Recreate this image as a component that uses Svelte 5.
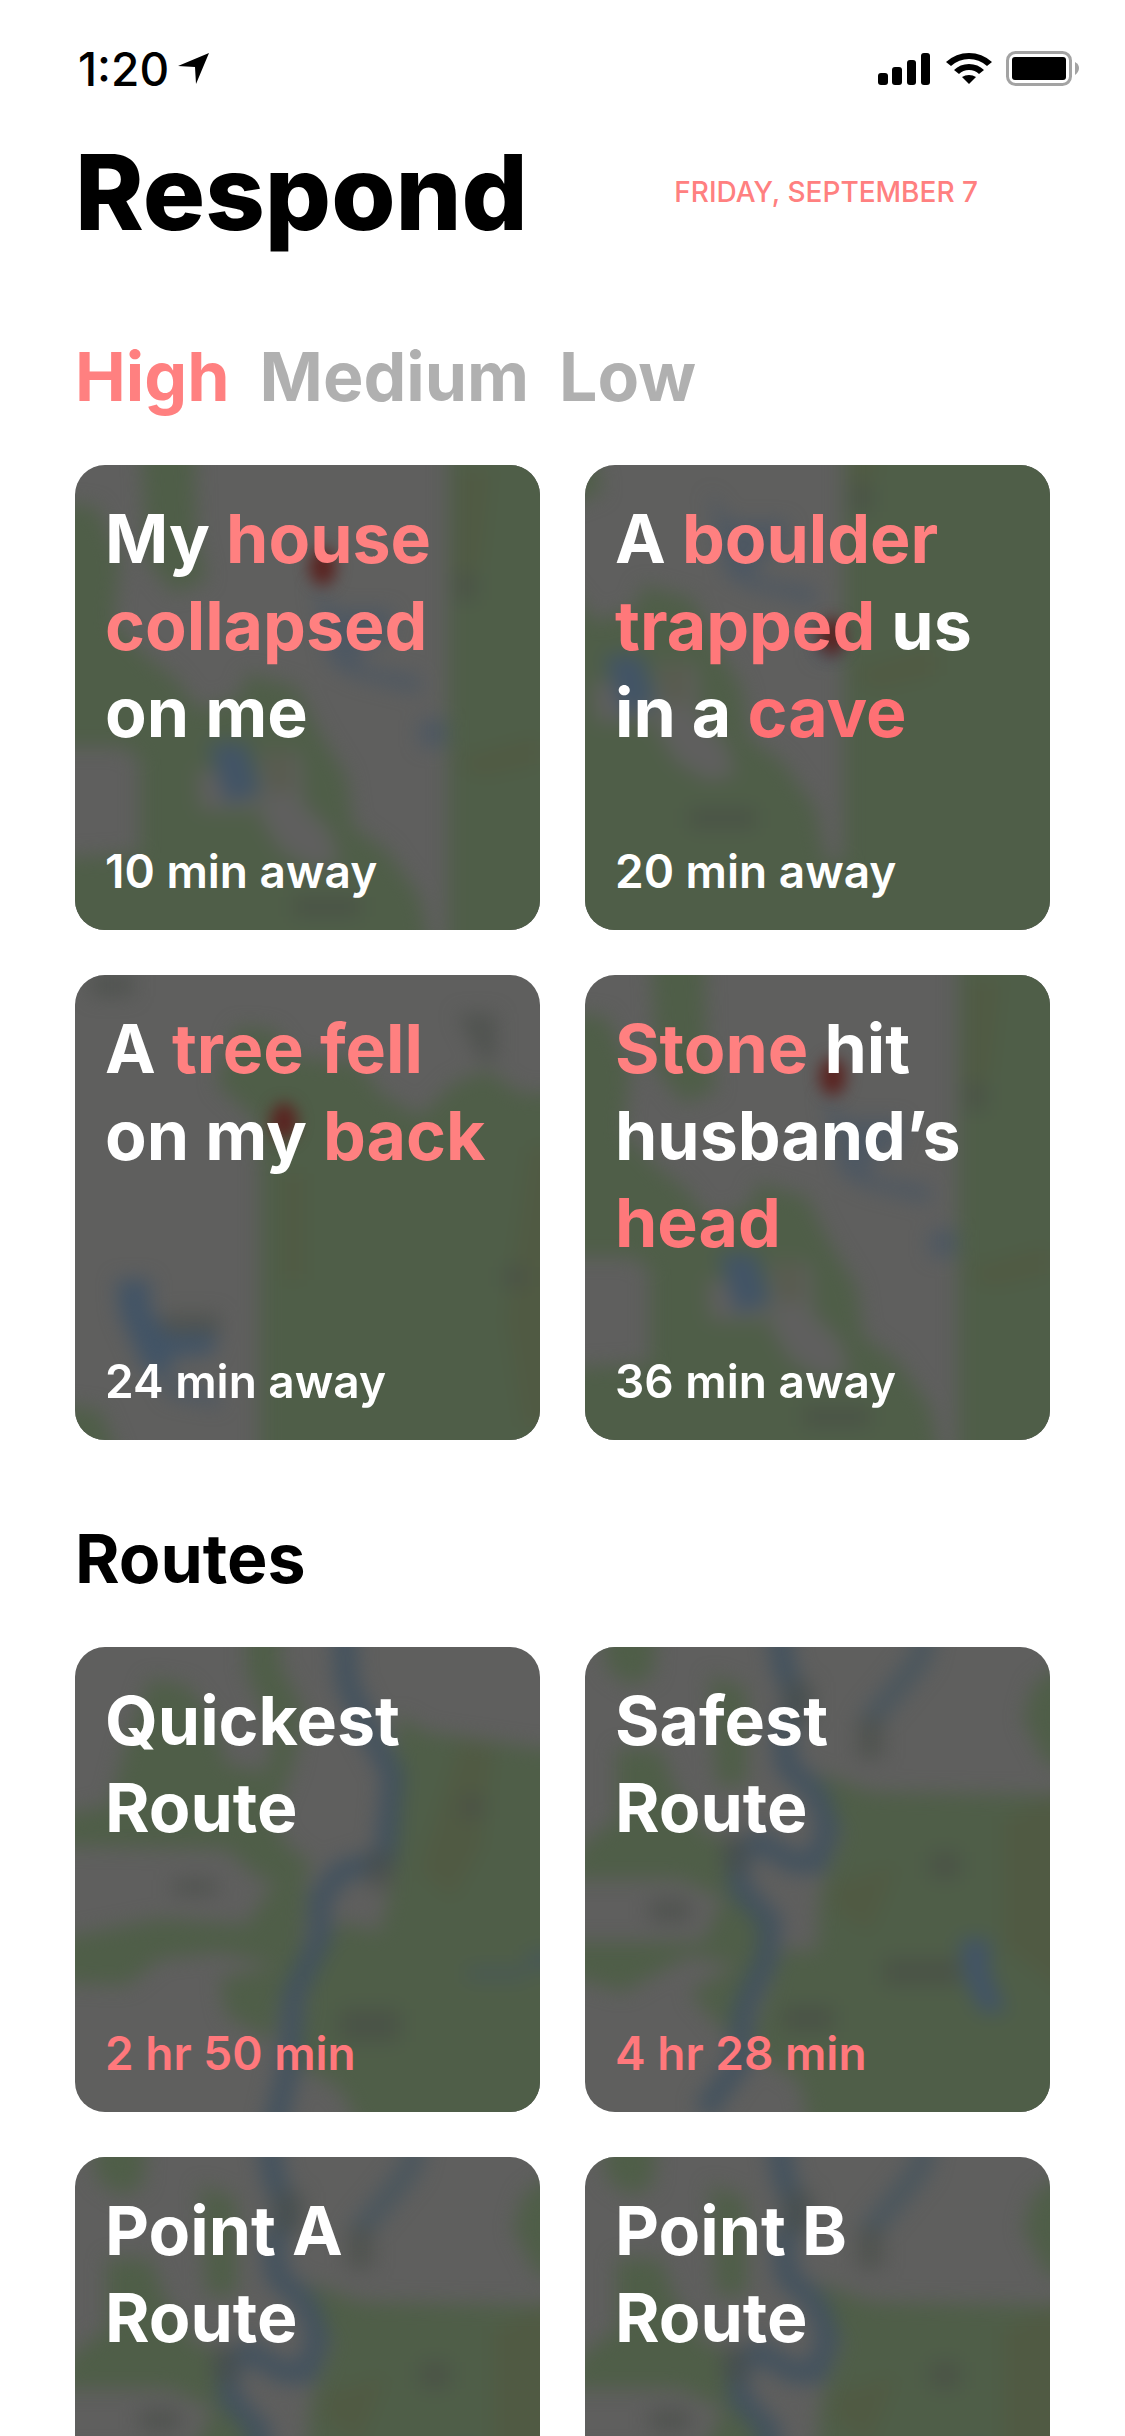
<script>
    const priorities = ['High', 'Medium', 'Low'];
    let selected = $state('High');

    const valley = [
        { kind: 'land', d: 'M1165 -400H2200V2200H1165Z' },
        { kind: 'land', d: 'M240 -100H400L410 260L440 390L340 430L260 330Z' },
        { kind: 'land', d: 'M-100 150L110 170L180 330L160 520L260 620L340 680L420 780L540 740L560 670L710 710L780 850L860 980L880 1130L980 1200L1080 1340L1110 1500H1300V1800H-100V1230L240 1210V930L190 890H-100Z' },
        { kind: 'ground', d: 'M610 900L720 910L730 1060L810 1140L840 1240L760 1260L660 1200L600 1100Z' },
        { kind: 'ground', d: 'M410 960H590V1080H420Z' },
        { kind: 'water', d: 'M760 390L820 480L1000 480L980 570L910 590L900 650L1080 680V730L880 680L810 640Z', soft: true },
        { kind: 'water', d: 'M445 880H560L600 1030L500 1060Z' },
        { kind: 'water', d: 'M1080 810H1160V890H1080Z', soft: true },
        { kind: 'scrub', d: 'M1200 60H1290L1260 330L1190 440Z' },
        { kind: 'scrub', d: 'M1180 930L1440 860V940L1260 980Z' },
        { kind: 'scrub', d: 'M620 910H690V1030H640Z' },
        { kind: 'label', d: 'M700 1340H900V1400H700Z' },
        { kind: 'label', d: 'M1190 370H1250V450H1190Z' }
    ];

    const forest = [
        { kind: 'land', d: 'M600 1600V620L590 480L470 370L530 200L640 210L700 290L900 310L960 400L1080 470L1180 370L1280 330L1380 400H1600V1600H600Z' },
        { kind: 'land', d: 'M-50 1330L120 1350L180 1500H-50Z' },
        { kind: 'water', d: 'M170 960H270V1050L330 1120L470 1110L460 1180L340 1190L310 1260L250 1220L180 1060Z' },
        { kind: 'water', d: 'M300 1240L480 1300V1340L320 1310Z', soft: true },
        { kind: 'scrub', d: 'M670 640H730V960H670Z' },
        { kind: 'scrub', d: 'M1410 560H1500V1400H1390L1340 1080Z' },
        { kind: 'label', d: 'M1190 160H1310V300H1260Z' },
        { kind: 'label', d: 'M1330 920H1400V980H1330Z' },
        { kind: 'label', d: 'M310 1060H480V1120H310Z' },
        { kind: 'label', d: 'M90 40H220V110H90Z' }
    ];

    const quickest = [
        { kind: 'land', d: 'M-50 640V560L150 520L200 330L270 140L380 160L460 260L500 400L620 420L640 300L560 120V-50H660V100L730 230L700 400L640 560L680 640L760 700L720 760L600 740L500 650Z' },
        { kind: 'land', d: 'M-50 930L300 860L560 880L650 740L740 760L720 1000L660 1100L640 1230L500 1150L480 1040L650 1000L480 960L300 980L200 1060L-50 1050Z' },
        { kind: 'land', d: 'M1010 250L1100 300L1440 350L1600 340V1600H960L840 1370L720 1300L750 1020L840 870L960 900L1000 740Z' },
        { kind: 'river', d: 'M850 -50L860 150L920 280L1000 430L975 680L840 720L780 800L780 920L700 1090L690 1290L640 1500' },
        { kind: 'scrub', d: 'M1200 330L1300 350L1260 650L1180 800L1080 720Z' },
        { kind: 'label', d: 'M340 740H470V790H340Z' },
        { kind: 'label', d: 'M920 660H1000V770H920Z' },
        { kind: 'label', d: 'M840 1130H1020V1230H840Z' },
        { kind: 'label', d: 'M1200 490H1270V560H1200Z' },
        { kind: 'water', d: 'M1220 1010H1500V960H1400V1040H1220Z', soft: true }
    ];

    const safest = [
        { kind: 'land', d: 'M740 420L900 480L1440 490L1600 450V1600H740L690 1350L560 1260L560 1180L640 950L740 960L750 780L820 600Z' },
        { kind: 'land', d: 'M-50 740L60 620L140 560L140 350L270 350L320 480L400 600L500 640L480 760L600 880L590 980L480 1220L360 1080L500 1000L360 970L160 1080L-50 1020V930H400L460 800L330 740H-50Z' },
        { kind: 'land', d: 'M100 -50H260L250 130L180 160L110 110Z' },
        { kind: 'land', d: 'M420 130L530 170V460H440Z' },
        { kind: 'land', d: 'M1500 80L1390 160L1360 260L1430 400H1500Z' },
        { kind: 'river', d: 'M620 -50L640 100L680 210L640 310L650 400L745 490L775 590L740 690L670 690L570 630L500 670L510 770L600 870L590 980L520 1130L510 1290L400 1440' },
        { kind: 'river', d: 'M1080 -50L1050 80L980 170L895 270', soft: true },
        { kind: 'water', d: 'M1170 920H1260V1020L1310 1140H1230L1180 1030Z' },
        { kind: 'scrub', d: 'M780 760L980 700L900 900L800 840Z' },
        { kind: 'scrub', d: 'M1300 560L1500 480V1100L1300 940Z' },
        { kind: 'label', d: 'M240 800H360V870H240Z' },
        { kind: 'label', d: 'M940 980H1170V1060H940Z' },
        { kind: 'label', d: 'M640 1120H790V1200H640Z' },
        { kind: 'label', d: 'M1080 660H1170V740H1080Z' },
        { kind: 'label', d: 'M860 260H940V380H860Z' },
        { kind: 'label', d: 'M640 150H730V270H640Z' },
        { kind: 'label', d: 'M460 610H530V720H460Z' }
    ];

    const emergencies = [
        {
            lines: [[{ text: 'My ' }, { text: 'house', tone: 'soft' }], [{ text: 'collapsed', tone: 'soft' }], [{ text: 'on me' }]],
            distance: '10 min away',
            map: valley,
            pin: { x: 788, y: 350 }
        },
        {
            lines: [
                [{ text: 'A ' }, { text: 'boulder', tone: 'soft' }],
                [{ text: 'trapped', tone: 'mid' }, { text: ' us' }],
                [{ text: 'in a ' }, { text: 'cave', tone: 'strong' }]
            ],
            distance: '20 min away',
            map: valley,
            shift: { x: -343, y: -265 },
            pin: { x: 785, y: 560 }
        },
        {
            lines: [[{ text: 'A ' }, { text: 'tree fell', tone: 'soft' }], [{ text: 'on my ' }, { text: 'back', tone: 'soft' }]],
            distance: '24 min away',
            map: forest,
            pin: { x: 672, y: 485 }
        },
        {
            lines: [[{ text: 'Stone', tone: 'soft' }, { text: ' hit' }], [{ text: 'husband’s' }], [{ text: 'head', tone: 'mid' }]],
            distance: '36 min away',
            map: valley,
            pin: { x: 788, y: 350 }
        }
    ];

    const routes = [
        { lines: [[{ text: 'Quickest' }], [{ text: 'Route' }]], duration: '2 hr 50 min', map: quickest },
        { lines: [[{ text: 'Safest' }], [{ text: 'Route' }]], duration: '4 hr 28 min', map: safest },
        { lines: [[{ text: 'Point A' }], [{ text: 'Route' }]], map: safest },
        { lines: [[{ text: 'Point B' }], [{ text: 'Route' }]], map: safest }
    ];
</script>

{#snippet card(item)}
    <a class="card" href="#map">
        <svg class="map" viewBox="45 45 1395 1395" preserveAspectRatio="xMidYMid slice" aria-hidden="true">
            <g class="terrain" transform="translate({item.shift?.x ?? 0} {item.shift?.y ?? 0})">
                {#each item.map as shape}
                    <path class={shape.kind} class:soft={shape.soft} d={shape.d} />
                {/each}
            </g>
            {#if item.pin}
                <ellipse class="pin" cx={item.pin.x} cy={item.pin.y} rx="40" ry="56" />
            {/if}
        </svg>
        <h3>
            {#each item.lines as line}
                <span class="line">{#each line as part}<span class={part.tone}>{part.text}</span>{/each}</span>
            {/each}
        </h3>
        {#if item.distance}
            <p>{item.distance}</p>
        {/if}
        {#if item.duration}
            <p class="duration">{item.duration}</p>
        {/if}
    </a>
{/snippet}

<div class="screen">
    <div class="status">
        <div class="clock">
            <span>1:20</span>
            <svg width="32" height="32" viewBox="0 0 32 32" aria-hidden="true">
                <path d="M31 0L18 31L17 14L0 13Z" />
            </svg>
        </div>
        <div class="indicators">
            <svg width="54" height="34" viewBox="0 0 54 34" aria-hidden="true">
                <rect x="0" y="21" width="10" height="12" rx="3" />
                <rect x="14" y="15" width="10" height="18" rx="3" />
                <rect x="29" y="8" width="9" height="25" rx="3" />
                <rect x="43" y="1" width="9" height="32" rx="3" />
            </svg>
            <svg width="46" height="34" viewBox="0 0 46 34" aria-hidden="true">
                <path d="M0 10Q10 1 23 1T46 10L41 14Q33 7 23 7T5 14Z" />
                <path d="M8 18Q14 12 23 12T38 18L33 22Q29 18 23 18T13 22Z" />
                <path d="M16 25Q19 23 23 23T30 25L23 32Z" />
            </svg>
            <svg width="74" height="36" viewBox="0 0 74 36" aria-hidden="true">
                <rect class="outline" x="1.5" y="1.5" width="63" height="32" rx="8" />
                <rect x="6" y="6" width="54" height="23" rx="3" />
                <path class="cap" d="M69 11Q73 13 73 17T69 24Z" />
            </svg>
        </div>
    </div>

    <header>
        <h1>Respond</h1>
        <time datetime="2018-09-07">FRIDAY, SEPTEMBER 7</time>
    </header>

    <main>
        <nav>
            {#each priorities as priority}
                <button type="button" class:active={selected === priority} onclick={() => (selected = priority)}>{priority}</button>
            {/each}
        </nav>
        <section class="cards">
            {#each emergencies as emergency}
                {@render card(emergency)}
            {/each}
        </section>

        <h2>Routes</h2>
        <section class="cards">
            {#each routes as route}
                {@render card(route)}
            {/each}
        </section>
    </main>
</div>

<style>
    :global(body) {
        background: #fff;
    }

    .screen {
        height: 100vh;
        overflow-y: auto;
        scrollbar-width: none;
        box-sizing: border-box;
        padding: 0 75px;
        font-family: Inter, "Liberation Sans", sans-serif;
        color: #000;
    }

    h1, h2, h3, p {
        margin: 0;
    }

    .status {
        display: flex;
        justify-content: space-between;
        align-items: center;
        height: 132px;
        padding-top: 6px;
        box-sizing: border-box;
        margin-right: -30px;
    }

    .clock, .indicators {
        display: flex;
        align-items: center;
    }

    .clock {
        gap: 9px;
        padding-left: 3px;
        font-size: 46px;
        font-weight: 500;
    }

    .indicators {
        gap: 14px;
    }

    .outline {
        fill: none;
        stroke: #a3a3a3;
        stroke-width: 3;
    }

    .cap {
        fill: #a3a3a3;
    }

    header {
        display: flex;
        justify-content: space-between;
        align-items: center;
        padding-right: 72px;
    }

    h1 {
        font-size: 104px;
        line-height: 120px;
        font-weight: 800;
    }

    time {
        font-size: 28px;
        font-weight: 500;
        color: #ff8080;
    }

    nav {
        display: flex;
        gap: 30px;
        margin: 81px 0 45px;
    }

    nav button {
        padding: 0;
        border: none;
        background: none;
        font: 700 68px/87px Inter, "Liberation Sans", sans-serif;
        color: #b0b0b0;
        cursor: pointer;
    }

    nav button.active {
        color: #ff8080;
    }

    h2 {
        margin: 75px 0 45px;
        font-size: 68px;
        line-height: 87px;
        font-weight: 700;
    }

    .cards {
        display: grid;
        grid-template-columns: 1fr 1fr;
        gap: 45px;
    }

    .card {
        position: relative;
        display: flex;
        flex-direction: column;
        justify-content: space-between;
        aspect-ratio: 1;
        box-sizing: border-box;
        padding: 30px;
        border-radius: 30px;
        overflow: hidden;
        background: #5f5f5e;
        color: #fff;
        text-decoration: none;
    }

    /* the blurred map sits behind the card's text */
    .map {
        position: absolute;
        inset: 0;
        width: 100%;
        height: 100%;
    }

    .terrain {
        filter: blur(28px);
    }

    .land {
        fill: #4f5e48;
    }

    .ground {
        fill: #5f5f5e;
    }

    .water {
        fill: #425466;
    }

    .scrub {
        fill: #525941;
        opacity: 0.6;
    }

    .label {
        fill: #474c47;
        opacity: 0.6;
    }

    .river {
        fill: none;
        stroke: #40515e;
        stroke-width: 68;
        opacity: 0.9;
    }

    .water.soft, .river.soft {
        opacity: 0.6;
    }

    .pin {
        fill: #5a2320;
        filter: blur(22px);
    }

    h3, .card p {
        position: relative;
    }

    h3 {
        font-size: 68px;
        line-height: 87px;
        font-weight: 700;
        white-space: nowrap;
    }

    .line {
        display: block;
        white-space: pre;
    }

    h3 .soft {
        color: #ff8080;
    }

    h3 .mid {
        color: #ff787a;
    }

    h3 .strong {
        color: #ff7074;
    }

    .card p {
        font-size: 46px;
        line-height: 57px;
        font-weight: 600;
    }

    .card .duration {
        color: #ff787c;
    }
</style>
